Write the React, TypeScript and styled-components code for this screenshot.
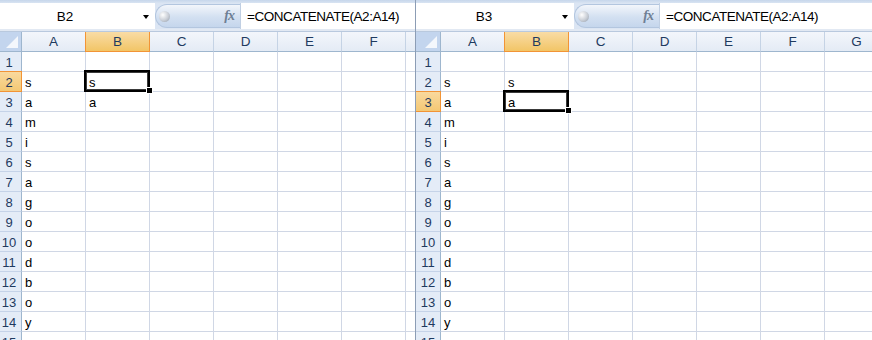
import * as React from 'react';
import styled, { createGlobalStyle, css } from 'styled-components';

const COLS = ['A', 'B', 'C', 'D', 'E', 'F', 'G'];
const WORD = ['s', 'a', 'm', 'i', 's', 'a', 'g', 'o', 'o', 'd', 'b', 'o', 'y'];
const ROWS = 15;

const GlobalStyle = createGlobalStyle`
  html, body {
    margin: 0;
    padding: 0;
    background: #ffffff;
  }
  body {
    font-family: 'Liberation Sans', Arial, sans-serif;
  }
`;

const Screen = styled.div`
  display: flex;
  width: 872px;
  height: 340px;
  overflow: hidden;
`;

const Pane = styled.div<{ $width?: number; $divider?: boolean }>`
  flex: ${({ $width }) => ($width ? `0 0 ${$width}px` : '1 1 auto')};
  overflow: hidden;
  ${({ $divider }) =>
    $divider &&
    css`
      border-left: 1px solid #8c9db5;
    `}
`;

const Window = styled.div<{ $offset: number }>`
  margin-left: ${({ $offset }) => $offset}px;
  width: 480px;
`;

const RibbonEdge = styled.div`
  height: 3px;
  background: linear-gradient(#c6d6eb, #d9e4f2);
`;

const FormulaBar = styled.div`
  display: flex;
  align-items: stretch;
  height: 26px;
  background: #dbe5f3;
`;

const NameBox = styled.div`
  position: relative;
  flex: 0 0 158px;
  display: flex;
  align-items: center;
  justify-content: center;
  padding-right: 22px;
  box-sizing: border-box;
  background: #ffffff;
  font-size: 13.5px;
  color: #000;
`;

const DropArrow = styled.span`
  position: absolute;
  right: 6px;
  top: 12px;
  width: 0;
  height: 0;
  border-left: 3.5px solid transparent;
  border-right: 3.5px solid transparent;
  border-top: 4px solid #000;
`;

const FxCapsule = styled.div`
  flex: 0 0 85px;
  margin: 1px 0;
  display: flex;
  align-items: center;
  justify-content: space-between;
  padding: 0 6px 0 3px;
  box-sizing: border-box;
  border-radius: 12px 0 0 12px;
  border: 1px solid #b3c6df;
  border-right: none;
  background: linear-gradient(#f3f6fb, #d3e0f1 55%, #c5d6ec);
`;

const Grip = styled.span`
  width: 11px;
  height: 11px;
  border-radius: 50%;
  background: radial-gradient(circle at 35% 35%, #ffffff, #c9ced6 55%, #8e98a5);
`;

const FxLabel = styled.span`
  font-family: 'Liberation Serif', 'Times New Roman', serif;
  font-style: italic;
  font-weight: bold;
  font-size: 14px;
  color: #6f7f95;
  letter-spacing: -1px;
`;

const FormulaInput = styled.div`
  flex: 1 1 auto;
  display: flex;
  align-items: center;
  padding-left: 6px;
  background: #ffffff;
  border-left: 1px solid #c0cfe3;
  font-size: 13.5px;
  letter-spacing: -0.45px;
  color: #000;
  white-space: nowrap;
`;

const Band = styled.div`
  height: 2px;
  background: #e2e9f3;
  border-bottom: 1px solid #b9c9de;
`;

const Sheet = styled.div`
  display: grid;
  grid-template-columns: 25px repeat(${COLS.length}, 64px);
  grid-template-rows: 20px;
  grid-auto-rows: 20px;
  font-size: 13px;
  line-height: 16px;
`;

const Corner = styled.div`
  position: relative;
  box-sizing: border-box;
  border-right: 1px solid #9eb6ce;
  border-bottom: 1px solid #9eb6ce;
  background: #c3d5ee;
  &::after {
    content: '';
    position: absolute;
    right: 3px;
    bottom: 3px;
    width: 0;
    height: 0;
    border-left: 12px solid transparent;
    border-bottom: 12px solid #f4f7fc;
  }
`;

const ColHead = styled.div<{ $selected?: boolean }>`
  box-sizing: border-box;
  display: flex;
  align-items: center;
  justify-content: center;
  border-right: 1px solid #c5d3e5;
  border-bottom: 1px solid #9eb6ce;
  background: linear-gradient(#f3f6fb, #e4ebf5);
  color: #1f3a5f;
  font-size: 13.5px;
  ${({ $selected }) =>
    $selected &&
    css`
      border-right-color: #f29436;
      border-bottom-color: #f29436;
      box-shadow: -1px 0 0 #f29436;
      background: linear-gradient(#f9dca6, #f2c566);
    `}
`;

const RowHead = styled.div<{ $selected?: boolean }>`
  box-sizing: border-box;
  display: flex;
  align-items: flex-end;
  justify-content: center;
  border-right: 1px solid #9eb6ce;
  border-bottom: 1px solid #c5d3e8;
  background: #e4ecf7;
  color: #1f3a5f;
  ${({ $selected }) =>
    $selected &&
    css`
      border-right-color: #f29436;
      border-bottom-color: #f29436;
      box-shadow: 0 -1px 0 #f29436;
      background: linear-gradient(#f9d99e, #f4c874);
    `}
`;

const Cell = styled.div<{ $active?: boolean }>`
  box-sizing: border-box;
  display: flex;
  align-items: flex-end;
  padding-left: 3px;
  border-right: 1px solid #d0d7e5;
  border-bottom: 1px solid #d0d7e5;
  color: #000;
  white-space: nowrap;
  ${({ $active }) =>
    $active &&
    css`
      position: relative;
    `}
`;

const Selection = styled.span`
  position: absolute;
  left: -2px;
  top: -2px;
  right: -1px;
  bottom: -1px;
  z-index: 1;
  border: 2px solid #000;
  box-shadow: inset 0 0 0 1px #3a3a3a;
  pointer-events: none;
`;

const FillHandle = styled.span`
  position: absolute;
  left: 61px;
  top: 16px;
  z-index: 2;
  width: 5px;
  height: 5px;
  background: #000;
  box-shadow: 0 0 0 1px #fff;
`;

type BookProps = {
  offset: number;
  active: { col: number; row: number };
};

const cellValue = (col: number, row: number) => {
  if (col === 0) return WORD[row - 2] ?? '';
  if (col === 1 && row === 2) return 's';
  if (col === 1 && row === 3) return 'a';
  return '';
};

const Workbook: React.FC<BookProps> = ({ offset, active }) => {
  const ref = `${COLS[active.col]}${active.row}`;

  return (
    <Window $offset={offset}>
      <RibbonEdge />
      <FormulaBar>
        <NameBox>
          {ref}
          <DropArrow />
        </NameBox>
        <FxCapsule>
          <Grip />
          <FxLabel>fx</FxLabel>
        </FxCapsule>
        <FormulaInput>=CONCATENATE(A2:A14)</FormulaInput>
      </FormulaBar>
      <Band />
      <Sheet>
        <Corner />
        {COLS.map((c, i) => (
          <ColHead key={c} $selected={i === active.col}>
            {c}
          </ColHead>
        ))}
        {Array.from({ length: ROWS }, (_, r) => {
          const row = r + 1;
          return (
            <React.Fragment key={row}>
              <RowHead $selected={row === active.row}>{row}</RowHead>
              {COLS.map((c, i) => {
                const isActive = i === active.col && row === active.row;
                return (
                  <Cell key={c} $active={isActive}>
                    {cellValue(i, row)}
                    {isActive && (
                      <>
                        <Selection />
                        <FillHandle />
                      </>
                    )}
                  </Cell>
                );
              })}
            </React.Fragment>
          );
        })}
      </Sheet>
    </Window>
  );
};

const App: React.FC = () => (
  <>
    <GlobalStyle />
    <Screen>
      <Pane $width={415}>
        <Workbook offset={-3} active={{ col: 1, row: 2 }} />
      </Pane>
      <Pane $divider>
        <Workbook offset={0} active={{ col: 1, row: 3 }} />
      </Pane>
    </Screen>
  </>
);

export default App;
